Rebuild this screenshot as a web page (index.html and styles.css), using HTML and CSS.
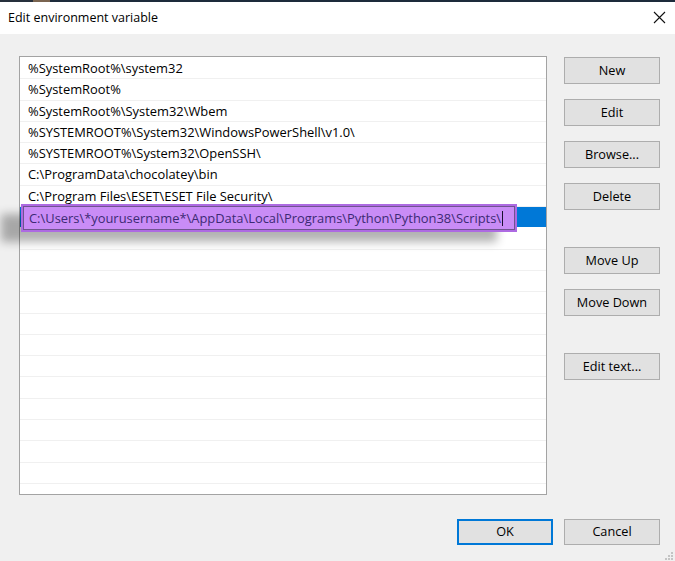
FILE: index.html
```html
<!DOCTYPE html>
<html lang="en">
<head>
  <meta charset="UTF-8">
  <title>Edit environment variable</title>
  <link rel="stylesheet" href="styles.css">
</head>
<body>
  <div class="topline"></div>

  <!-- title bar -->
  <div class="titlebar">
    <span class="title">Edit environment variable</span>
    <svg class="close" width="13" height="13" viewBox="0 0 13 13">
      <path d="M1 1 L12 12 M12 1 L1 12" stroke="#111" stroke-width="1.1" fill="none"/>
    </svg>
  </div>

  <div class="content">
    <!-- path list -->
    <div class="list">
      <div class="row">%SystemRoot%\system32</div>
      <div class="row">%SystemRoot%</div>
      <div class="row">%SystemRoot%\System32\Wbem</div>
      <div class="row">%SYSTEMROOT%\System32\WindowsPowerShell\v1.0\</div>
      <div class="row">%SYSTEMROOT%\System32\OpenSSH\</div>
      <div class="row">C:\ProgramData\chocolatey\bin</div>
      <div class="row">C:\Program Files\ESET\ESET File Security\</div>
      <div class="row selected">
        <div class="edit-wrap">
          <div class="edit">C:\Users\*yourusername*\AppData\Local\Programs\Python\Python38\Scripts\<span class="caret"></span></div>
        </div>
      </div>
      <div class="row"></div>
      <div class="row"></div>
      <div class="row"></div>
      <div class="row"></div>
      <div class="row"></div>
      <div class="row"></div>
      <div class="row"></div>
      <div class="row"></div>
      <div class="row"></div>
      <div class="row"></div>
      <div class="row"></div>
      <div class="row"></div>
    </div>

    <!-- side buttons -->
    <div class="side">
      <button class="btn">New</button>
      <button class="btn">Edit</button>
      <button class="btn">Browse...</button>
      <button class="btn">Delete</button>
      <button class="btn far">Move Up</button>
      <button class="btn">Move Down</button>
      <button class="btn far">Edit text...</button>
    </div>
  </div>

  <div class="footer">
    <button class="btn default">OK</button>
    <button class="btn">Cancel</button>
  </div>

  <svg class="grip" width="9" height="9" viewBox="0 0 9 9">
    <rect x="7" y="1" width="2" height="2" fill="#c4c4c4"/>
    <rect x="4" y="4" width="2" height="2" fill="#c4c4c4"/>
    <rect x="7" y="4" width="2" height="2" fill="#c4c4c4"/>
    <rect x="1" y="7" width="2" height="2" fill="#c4c4c4"/>
    <rect x="4" y="7" width="2" height="2" fill="#c4c4c4"/>
    <rect x="7" y="7" width="2" height="2" fill="#c4c4c4"/>
  </svg>
</body>
</html>
```

FILE: styles.css
```css
body {
  margin: 0;
  width: 675px;
  height: 561px;
  background: #f0f0f0;
  font-family: "Open Sans", "Noto Sans", sans-serif;
  font-size: 12.9px;
  color: #000;
  position: relative;
  overflow: hidden;
}
.topline {
  height: 2px;
  background: linear-gradient(to right, #26303c 0, #26303c 33px, #7a6450 33px, #7a6450 50px, #1d2b3b 50px);
}
.titlebar {
  height: 32px;
  background: #fff;
  display: flex;
  align-items: center;
  justify-content: space-between;
  padding: 0 9px 0 8px;
}
.title {
  font-size: 12.5px;
  margin-top: -1px;
}
.close {
  margin-top: -1px;
}
.content {
  display: flex;
  padding: 22px 15px 0 19px;
  gap: 17px;
}
.list {
  width: 526px;
  height: 436px;
  padding-top: 1px;
  box-sizing: content-box;
  background: #fff;
  border: 1px solid #a3a3a3;
}
.row {
  height: 21.3px;
  box-sizing: border-box;
  border-bottom: 1px solid #f0f0f0;
  padding-left: 8px;
  line-height: 21px;
  white-space: nowrap;
}
.row.selected {
  position: relative;
  background: #0078d7;
  border-bottom-color: #fff;
}
.edit-wrap {
  position: absolute;
  left: 1px;
  top: -3px;
  width: 496px;
  height: 28px;
  box-sizing: border-box;
  border: 2px solid #ad6ae2;
  background: #c98cf6;
  box-shadow: -20px 10px 10px rgba(0, 0, 0, 0.3);
}
.edit {
  height: 100%;
  box-sizing: border-box;
  border: 1px solid #6f548f;
  padding-left: 5px;
  line-height: 22px;
  color: #3c2a74;
}
.caret {
  display: inline-block;
  width: 1px;
  height: 15px;
  background: #1a1030;
  vertical-align: -3px;
  margin-left: 1px;
}
.side {
  display: flex;
  flex-direction: column;
  align-items: flex-start;
  padding-top: 1px;
}
.btn {
  width: 96px;
  height: 27px;
  margin-bottom: 15px;
  background: #e1e1e1;
  border: 1px solid #adadad;
  font-family: inherit;
  font-size: 12.7px;
  color: #000;
  padding: 0 0 2px;
}
.btn.far {
  margin-top: 22px;
}
.footer {
  display: flex;
  justify-content: flex-end;
  gap: 11px;
  padding: 24px 15px 0 0;
}
.footer .btn {
  height: 26px;
  margin: 0;
}
.btn.default {
  border: 2px solid #0078d7;
}
.grip {
  position: absolute;
  right: 2px;
  bottom: 1px;
}
```
